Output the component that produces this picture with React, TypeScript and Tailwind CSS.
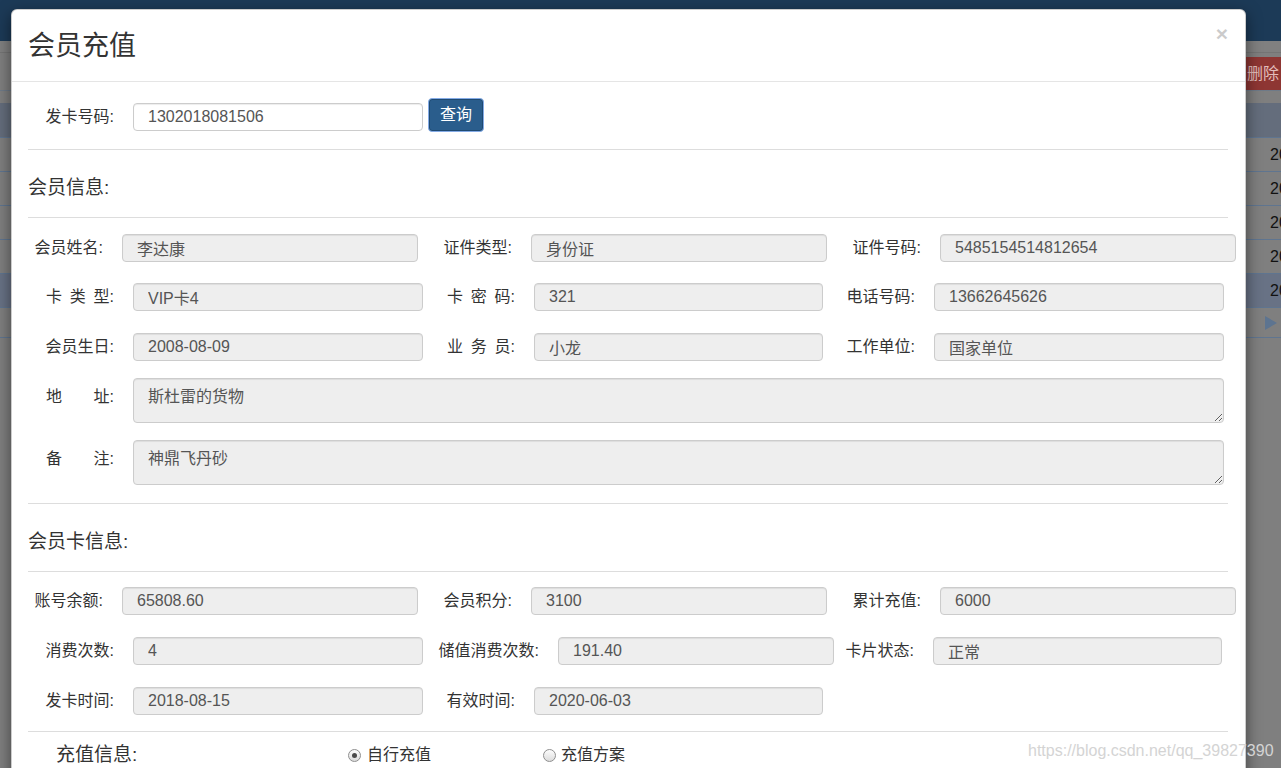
import React from "react";

type FieldProps = {
  label: string | string[];
  value: string;
  ml?: string;
  lw: string;
  iw: string;
};

function Label({ label, lw }: { label: string | string[]; lw: string }) {
  if (Array.isArray(label)) {
    return (
      <span className={`${lw} flex shrink-0 justify-end`}>
        <span className="flex w-[68px] justify-between">
          {label.map((p) => (
            <span key={p}>{p}</span>
          ))}
        </span>
      </span>
    );
  }
  return <span className={`${lw} block shrink-0 whitespace-nowrap text-right`}>{label}</span>;
}

function Field({ label, value, ml = "", lw, iw }: FieldProps) {
  return (
    <div className={`${ml} flex shrink-0 items-center`}>
      <Label label={label} lw={lw} />
      <input
        readOnly
        value={value}
        className={`${iw} ml-[19px] h-[28px] rounded-[4px] border border-[#ccc] bg-[#eee] px-[14px] text-[16px] text-[#555] shadow-[inset_0_1px_1px_rgba(0,0,0,0.075)] outline-none`}
      />
    </div>
  );
}

function Row({ mt, fields }: { mt: string; fields: FieldProps[] }) {
  return (
    <div className={`${mt} flex h-[28px] items-center`}>
      {fields.map((f) => (
        <Field key={String(f.label)} {...f} />
      ))}
    </div>
  );
}

function Area({ mt, label, value }: { mt: string; label: string[]; value: string }) {
  return (
    <div className={`${mt} flex items-start`}>
      <span className="mt-[9px] leading-[20px]">
        <Label label={label} lw="w-[86px]" />
      </span>
      <textarea
        readOnly
        defaultValue={value}
        className="ml-[19px] h-[45px] w-[1091px] rounded-[4px] border border-[#ccc] bg-[#eee] px-[14px] pt-[8px] text-[16px] leading-[20px] text-[#555] shadow-[inset_0_1px_1px_rgba(0,0,0,0.075)] outline-none"
      />
    </div>
  );
}

function Radio({ checked }: { checked?: boolean }) {
  return (
    <span className="flex h-[13px] w-[13px] items-center justify-center rounded-full border border-[#8f8f8f] bg-gradient-to-b from-[#fdfdfd] to-[#dcdcdc]">
      {checked && <span className="h-[5px] w-[5px] rounded-full bg-[#4a4a4a]" />}
    </span>
  );
}

function SectionTitle({ children }: { children: React.ReactNode }) {
  return <div className="pt-[28px] pb-[19px] text-[19px] leading-[20px] text-[#333]">{children}</div>;
}

function Rule() {
  return <div className="h-px bg-[#ddd]" />;
}

function Background() {
  const rows = [false, false, false, false, true];
  return (
    <div className="flex flex-col">
      <div className="h-[41px] bg-[#1c3a57]" />
      <div className="h-[12px] border-b border-[#747474] bg-[#808080]" />
      <div className="flex h-[38px] items-start justify-end border-b border-[#6e7a88]">
        <div className="mt-[4px] -mr-[4px] flex h-[33px] items-center rounded-[3px] bg-[#8e3633] pl-[40px] pr-[6px] text-[16px] text-[#e2bdbb]">
          删除
        </div>
      </div>
      <div className="h-[12px]" />
      <div className="h-[35px] border-b border-[#5f7590] bg-[#646d7c]" />
      {rows.map((hl, i) => (
        <div
          key={i}
          className={`flex h-[34px] items-center justify-end border-b border-[#5f7590] ${hl ? "bg-[#687285]" : "bg-[#7f7f7f]"}`}
        >
          <span className="w-[11px] whitespace-nowrap text-[16px] text-[#111]">2018-08-15</span>
        </div>
      ))}
      <div className="flex h-[30px] items-center justify-end border-b border-[#5f7590] pr-[4px]">
        <svg width="12" height="14" viewBox="0 0 12 14">
          <polygon points="0,0 12,7 0,14" fill="#5d7490" />
        </svg>
      </div>
    </div>
  );
}

export default function App() {
  return (
    <div className="relative h-[768px] w-full overflow-hidden bg-[#7f7f7f] font-['Liberation_Sans','Noto_Sans_CJK_SC',sans-serif] text-[16px] text-[#333]">
      <Background />

      <div className="absolute left-[11px] top-[9px] w-[1235px] rounded-[6px] border border-black/20 bg-white shadow-[0_5px_15px_rgba(0,0,0,0.5)]">
        <div className="flex h-[72px] items-center justify-between border-b border-[#e5e5e5] pl-[16px] pr-[17px]">
          <h4 className="text-[27px] leading-[32px] text-[#333]">会员充值</h4>
          <span className="mt-[13px] self-start text-[21px] font-bold leading-none text-black opacity-20">×</span>
        </div>

        <div className="pl-[16px] pr-[17px] pb-[30px]">
          <div className="flex items-end pt-[16px]">
            <div className="mt-[4px] flex self-center">
              <Label label="发卡号码:" lw="w-[86px]" />
            </div>
            <input
              value="1302018081506"
              readOnly
              className="ml-[19px] mb-[1px] h-[28px] w-[290px] rounded-[4px] border border-[#ccc] bg-white px-[14px] text-[16px] text-[#555] shadow-[inset_0_1px_1px_rgba(0,0,0,0.075)] outline-none"
            />
            <button className="ml-[5px] h-[34px] w-[56px] rounded-[4px] border border-[#84abe6] bg-[#2a5d8c] text-[16px] text-white shadow-[inset_0_0_0_1px_#1f4a72]">
              查询
            </button>
          </div>
          <div className="mt-[17px]">
            <Rule />
          </div>

          <SectionTitle>会员信息:</SectionTitle>
          <Rule />
          <Row
            mt="mt-[16px]"
            fields={[
              { label: "会员姓名:", value: "李达康", lw: "w-[75px]", iw: "w-[296px]" },
              { label: "证件类型:", value: "身份证", ml: "ml-[19px]", lw: "w-[75px]", iw: "w-[296px]" },
              { label: "证件号码:", value: "5485154514812654", ml: "ml-[19px]", lw: "w-[75px]", iw: "w-[296px]" },
            ]}
          />
          <Row
            mt="mt-[21px]"
            fields={[
              { label: ["卡", "类", "型:"], value: "VIP卡4", lw: "w-[86px]", iw: "w-[290px]" },
              { label: ["卡", "密", "码:"], value: "321", ml: "ml-[6px]", lw: "w-[86px]", iw: "w-[289px]" },
              { label: "电话号码:", value: "13662645626", ml: "ml-[6px]", lw: "w-[86px]", iw: "w-[290px]" },
            ]}
          />
          <Row
            mt="mt-[22px]"
            fields={[
              { label: "会员生日:", value: "2008-08-09", lw: "w-[86px]", iw: "w-[290px]" },
              { label: ["业", "务", "员:"], value: "小龙", ml: "ml-[6px]", lw: "w-[86px]", iw: "w-[289px]" },
              { label: "工作单位:", value: "国家单位", ml: "ml-[6px]", lw: "w-[86px]", iw: "w-[290px]" },
            ]}
          />
          <Area mt="mt-[17px]" label={["地", "址:"]} value="斯杜雷的货物" />
          <Area mt="mt-[17px]" label={["备", "注:"]} value="神鼎飞丹砂" />
          <div className="mt-[18px]">
            <Rule />
          </div>

          <SectionTitle>会员卡信息:</SectionTitle>
          <Rule />
          <Row
            mt="mt-[15px]"
            fields={[
              { label: "账号余额:", value: "65808.60", lw: "w-[75px]", iw: "w-[296px]" },
              { label: "会员积分:", value: "3100", ml: "ml-[19px]", lw: "w-[75px]", iw: "w-[296px]" },
              { label: "累计充值:", value: "6000", ml: "ml-[19px]", lw: "w-[75px]", iw: "w-[296px]" },
            ]}
          />
          <Row
            mt="mt-[22px]"
            fields={[
              { label: "消费次数:", value: "4", lw: "w-[86px]", iw: "w-[290px]" },
              { label: "储值消费次数:", value: "191.40", ml: "ml-[6px]", lw: "w-[110px]", iw: "w-[276px]" },
              { label: "卡片状态:", value: "正常", ml: "ml-[6px]", lw: "w-[74px]", iw: "w-[289px]" },
            ]}
          />
          <Row
            mt="mt-[22px]"
            fields={[
              { label: "发卡时间:", value: "2018-08-15", lw: "w-[86px]", iw: "w-[290px]" },
              { label: "有效时间:", value: "2020-06-03", ml: "ml-[6px]", lw: "w-[86px]", iw: "w-[289px]" },
            ]}
          />
          <div className="mt-[16px]">
            <Rule />
          </div>

          <div className="box-content flex h-[30px] items-center pt-[8px]">
            <span className="ml-[28px] w-[292px] text-[19px] text-[#333]">充值信息:</span>
            <span className="flex items-center gap-[6px] text-[16px]">
              <Radio checked />
              自行充值
            </span>
            <span className="ml-[112px] flex items-center gap-[5px] text-[16px]">
              <Radio />
              充值方案
            </span>
          </div>
        </div>
      </div>

      <div className="absolute left-[1028px] top-[739px] whitespace-nowrap text-[16px] text-[#d4d4d4]">
        https://blog.csdn.net/qq_39827390
      </div>
    </div>
  );
}
